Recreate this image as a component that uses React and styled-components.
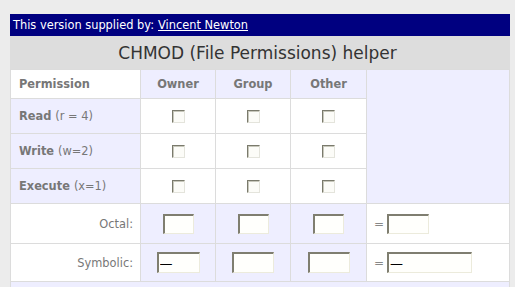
import React from "react";
import styled, { createGlobalStyle } from "styled-components";

const GlobalStyle = createGlobalStyle`
  html, body {
    margin: 0;
    padding: 0;
    background: #ececec;
  }
  body {
    padding: 14px 0 0 10px;
    font-family: Verdana, "DejaVu Sans", sans-serif;
    font-size: 11.4px;
    color: #777;
  }
`;

const Panel = styled.div`
  width: 500px;
`;

const CreditBar = styled.div`
  height: 22px;
  display: flex;
  align-items: center;
  padding-left: 3px;
  background: #000080;
  color: #fff;
  white-space: nowrap;

  a {
    color: #fff;
    text-decoration: underline;
    margin-left: 4px;
  }
`;

const Title = styled.h1`
  margin: 0;
  height: 33px;
  display: flex;
  align-items: center;
  justify-content: center;
  padding-right: 5px;
  background: #dddddd;
  color: #333;
  font-size: 17px;
  font-weight: normal;
`;

const Grid = styled.div`
  display: grid;
  grid-template-columns: 129px 74px 74px 75px 142px;
  grid-template-rows: 28px 34px 34px 34px 39px 37px 5px;
  gap: 1px;
  padding: 1px 1px 0 1px;
  background: #dcdcdc;
`;

const Cell = styled.div`
  display: flex;
  align-items: center;
  justify-content: ${({ $align }) =>
    $align === "right" ? "flex-end" : $align === "left" ? "flex-start" : "center"};
  padding: ${({ $align }) =>
    $align === "right" ? "0 7px 0 0" : $align === "left" ? "0 0 0 8px" : "0"};
  background: ${({ $tone }) => ($tone === "lavender" ? "#eeeeff" : "#ffffff")};
  font-weight: ${({ $bold }) => ($bold ? "bold" : "normal")};
  color: #777;
  white-space: nowrap;
`;

const SideCell = styled.div`
  grid-column: 5;
  grid-row: 1 / span 4;
  background: #eeeeff;
`;

const TotalCell = styled(Cell)`
  justify-content: flex-start;
  padding-left: 7px;
  gap: 3px;
  font-size: 12px;
  color: #888;
`;

const FooterCell = styled.div`
  grid-column: 1 / -1;
  background: #eeeeff;
`;

const Strong = styled.b`
  font-weight: bold;
  margin-right: 4px;
`;

const Check = styled.input.attrs({ type: "checkbox" })`
  appearance: none;
  margin: 0;
  width: 13px;
  height: 13px;
  box-sizing: border-box;
  background: #fcfcf8;
  border-style: solid;
  border-width: 1px;
  border-color: #7a7a6c #e4e4dc #e4e4dc #7a7a6c;
  box-shadow: inset 1px 1px 0 #c8c8bc;
`;

const Field = styled.input`
  box-sizing: border-box;
  width: ${({ $w }) => $w}px;
  height: ${({ $h }) => $h}px;
  margin: 0;
  padding: 0 0 0 1px;
  background: #fffffc;
  border-style: solid;
  border-width: 2px 1px 1px 2px;
  border-color: #7f7e70 #ecebdc #ecebdc #7f7e70;
  font-family: "DejaVu Sans", sans-serif;
  font-size: 13px;
  color: #000;
  outline: none;
`;

const who = ["Owner", "Group", "Other"];
const perms = [
  { name: "Read", hint: "(r = 4)" },
  { name: "Write", hint: "(w=2)" },
  { name: "Execute", hint: "(x=1)" },
];

export default function App() {
  return (
    <>
      <GlobalStyle />
      <Panel>
        <CreditBar>
          This version supplied by:<a href="#">Vincent Newton</a>
        </CreditBar>
        <Title>CHMOD (File Permissions) helper</Title>
        <Grid>
          <SideCell />
          <Cell $tone="white" $align="left" $bold>
            Permission
          </Cell>
          {who.map((w) => (
            <Cell key={w} $tone="lavender" $bold>
              {w}
            </Cell>
          ))}
          {perms.map((p) => (
            <React.Fragment key={p.name}>
              <Cell $tone="lavender" $align="left">
                <Strong>{p.name}</Strong>
                {p.hint}
              </Cell>
              {who.map((w) => (
                <Cell key={w} $tone="white">
                  <Check />
                </Cell>
              ))}
            </React.Fragment>
          ))}

          <Cell $tone="white" $align="right">
            Octal:
          </Cell>
          {who.map((w) => (
            <Cell key={w} $tone="lavender">
              <Field $w={31} $h={20} defaultValue="" />
            </Cell>
          ))}
          <TotalCell $tone="white">
            =<Field $w={42} $h={20} defaultValue="" />
          </TotalCell>

          <Cell $tone="white" $align="right">
            Symbolic:
          </Cell>
          {who.map((w, i) => (
            <Cell key={w} $tone="lavender">
              <Field $w={i === 0 ? 43 : 42} $h={21} defaultValue={i === 0 ? "—" : ""} />
            </Cell>
          ))}
          <TotalCell $tone="white">
            =<Field $w={85} $h={21} defaultValue="—" />
          </TotalCell>

          <FooterCell />
        </Grid>
      </Panel>
    </>
  );
}
